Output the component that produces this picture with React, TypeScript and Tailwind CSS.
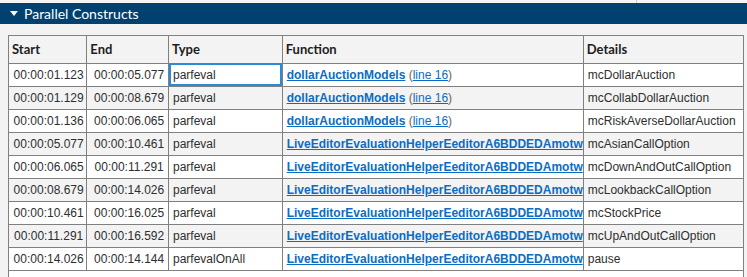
import * as React from 'react'

const rows = [
  { start: '00:00:01.123', end: '00:00:05.077', type: 'parfeval', fn: 'dollarAuctionModels', line: true, details: 'mcDollarAuction' },
  { start: '00:00:01.129', end: '00:00:08.679', type: 'parfeval', fn: 'dollarAuctionModels', line: true, details: 'mcCollabDollarAuction' },
  { start: '00:00:01.136', end: '00:00:06.065', type: 'parfeval', fn: 'dollarAuctionModels', line: true, details: 'mcRiskAverseDollarAuction' },
  { start: '00:00:05.077', end: '00:00:10.461', type: 'parfeval', fn: 'LiveEditorEvaluationHelperEeditorA6BDDEDAmotw', line: false, details: 'mcAsianCallOption' },
  { start: '00:00:06.065', end: '00:00:11.291', type: 'parfeval', fn: 'LiveEditorEvaluationHelperEeditorA6BDDEDAmotw', line: false, details: 'mcDownAndOutCallOption' },
  { start: '00:00:08.679', end: '00:00:14.026', type: 'parfeval', fn: 'LiveEditorEvaluationHelperEeditorA6BDDEDAmotw', line: false, details: 'mcLookbackCallOption' },
  { start: '00:00:10.461', end: '00:00:16.025', type: 'parfeval', fn: 'LiveEditorEvaluationHelperEeditorA6BDDEDAmotw', line: false, details: 'mcStockPrice' },
  { start: '00:00:11.291', end: '00:00:16.592', type: 'parfeval', fn: 'LiveEditorEvaluationHelperEeditorA6BDDEDAmotw', line: false, details: 'mcUpAndOutCallOption' },
  { start: '00:00:14.026', end: '00:00:14.144', type: 'parfevalOnAll', fn: 'LiveEditorEvaluationHelperEeditorA6BDDEDAmotw', line: false, details: 'pause' },
]

function App() {
  return (
    <div className="w-[747px] h-[277px] overflow-hidden bg-[#f3f3f3] font-['Liberation_Sans',Arial,sans-serif]">
      <div className="flex h-[3px] bg-[#f5f5f5]">
        <div className="w-[637px] border-r border-[#c8c8c8]" />
      </div>
      <div className="flex items-center h-[21px] bg-[#00416f] text-white">
        <span className="ml-[10px] mr-[6px] w-0 h-0 border-l-[4px] border-r-[4px] border-t-[5px] border-l-transparent border-r-transparent border-t-white" />
        <span className="text-[14px] font-['Lato',sans-serif] leading-none">Parallel Constructs</span>
      </div>
      <div className="mt-[11px] ml-[8px] w-[736px] h-[260px] bg-white border border-[#808080] overflow-hidden">
        <table className="table-fixed border-collapse text-[12px] text-[#2e2e2e]">
          <colgroup>
            <col className="w-[78px]" />
            <col className="w-[82px]" />
            <col className="w-[115px]" />
            <col className="w-[300px]" />
            <col className="w-[160px]" />
          </colgroup>
          <thead>
            <tr className="h-[27px] bg-[#f3f3f3] font-['Lato',sans-serif] text-[13px] font-bold text-[#1d1d1d] text-left">
              <th className="pl-[3px] border-r border-b border-[#808080]">Start</th>
              <th className="pl-[3px] border-r border-b border-[#808080]">End</th>
              <th className="pl-[3px] border-r border-b border-[#808080]">Type</th>
              <th className="pl-[3px] border-r border-b border-[#808080]">Function</th>
              <th className="pl-[3px] border-b border-[#808080]">Details</th>
            </tr>
          </thead>
          <tbody>
            {rows.map((r, i) => (
              <tr key={i} className={`h-[23px] ${i % 2 === 1 ? 'bg-[#f3f3f3]' : 'bg-white'}`}>
                <td className="text-center whitespace-nowrap overflow-hidden pl-[2px] border-r border-b border-[#808080]">{r.start}</td>
                <td className="text-center whitespace-nowrap overflow-hidden pl-[3px] border-r border-b border-[#808080]">{r.end}</td>
                <td className={`pl-[4px] border-b ${i === 0 ? 'outline-2 -outline-offset-2 outline-[#2a8ad8] border-r border-[#808080]' : 'border-r border-[#808080]'}`}>
                  {r.type}
                </td>
                <td className="pl-[4px] border-r border-b border-[#808080] whitespace-nowrap overflow-hidden">
                  <span className="font-bold text-[#0b6cc4] underline">{r.fn}</span>
                  {r.line ? (
                    <span className="text-[#666]">
                      {' ('}
                      <span className="text-[#0b6cc4] underline">line 16</span>
                      {')'}
                    </span>
                  ) : null}
                </td>
                <td className="pl-[4px] border-b border-[#808080] whitespace-nowrap overflow-hidden">{r.details}</td>
              </tr>
            ))}
          </tbody>
        </table>
      </div>
    </div>
  )
}

export default App
